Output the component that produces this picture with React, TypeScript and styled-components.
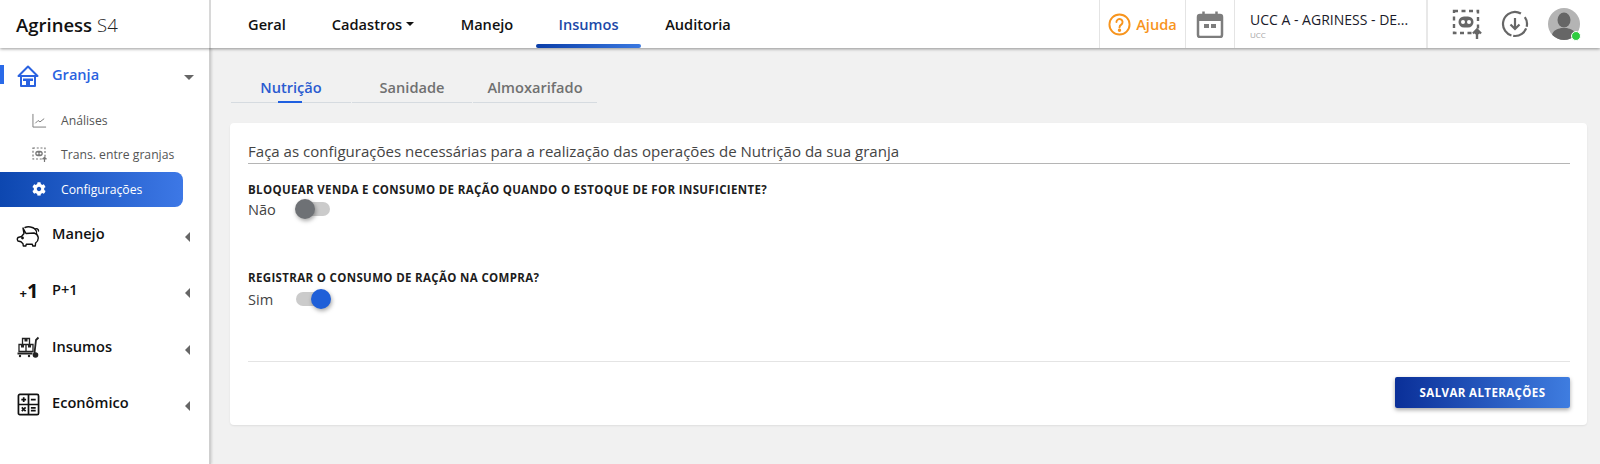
import styled, { createGlobalStyle } from 'styled-components'
import { FaCog } from 'react-icons/fa'

const GlobalStyle = createGlobalStyle`
  html, body {
    margin: 0;
    padding: 0;
    height: 100%;
    background: #f1f1f1;
    font-family: 'Open Sans', 'Noto Sans', sans-serif;
  }
  * { box-sizing: border-box; }
`

const Page = styled.div`
  display: flex;
  flex-direction: column;
  height: 464px;
  overflow: hidden;
`

const Header = styled.header`
  display: flex;
  align-items: stretch;
  height: 48px;
  flex: none;
  background: #fff;
  box-shadow: 0 1px 3px rgba(0, 0, 0, 0.4);
  position: relative;
  z-index: 2;
`

const Logo = styled.div`
  width: 211px;
  flex: none;
  padding-left: 16px;
  display: flex;
  align-items: center;
  gap: 5px;
  font-size: 18.5px;
  font-weight: 600;
  color: #111;
  border-right: 2px solid #d8d8d8;
  span {
    font-weight: 300;
    color: #222;
  }
`

const Nav = styled.nav`
  display: flex;
  flex: 1;
  padding-left: 15px;
`

const NavItem = styled.div<{ $active?: boolean; $w: number }>`
  width: ${(p) => p.$w}px;
  display: flex;
  align-items: center;
  justify-content: center;
  gap: 4px;
  position: relative;
  font-size: 14.6px;
  font-weight: 600;
  color: ${(p) => (p.$active ? '#1b49a8' : '#111')};
  &::after {
    content: '';
    display: ${(p) => (p.$active ? 'block' : 'none')};
    position: absolute;
    left: 0;
    right: 0;
    bottom: 0;
    height: 4px;
    border-radius: 2px;
    background: linear-gradient(90deg, #0a3ea8, #3a78e0);
  }
`

const Caret = styled.i`
  width: 0;
  height: 0;
  border-left: 4px solid transparent;
  border-right: 4px solid transparent;
  border-top: 4px solid #111;
`

const HeaderRight = styled.div`
  display: flex;
  align-items: stretch;
`

const Cell = styled.div<{ $w: number }>`
  width: ${(p) => p.$w}px;
  display: flex;
  align-items: center;
  justify-content: center;
  gap: 5px;
  border-left: 1px solid #e4e4e4;
`

const HelpText = styled.span`
  font-size: 14.6px;
  font-weight: 600;
  color: #f7941d;
`

const FarmCell = styled(Cell)`
  flex-direction: column;
  align-items: flex-start;
  gap: 0;
  padding-left: 15px;
  border-right: 2px solid #e8e8e8;
`

const FarmName = styled.div`
  font-size: 14px;
  line-height: 19px;
  margin-top: 3px;
  color: #1a1a2a;
`

const FarmSub = styled.div`
  font-size: 8px;
  line-height: 12px;
  color: #a5a5a5;
`

const Tools = styled.div`
  display: flex;
  align-items: center;
  width: 172px;
  padding-left: 24px;
  gap: 19px;
`

const Avatar = styled.div`
  width: 32px;
  height: 32px;
  border-radius: 50%;
  background: #b4b4b4;
  overflow: hidden;
`

const AvatarWrap = styled.div`
  position: relative;
  width: 32px;
  height: 32px;
  flex: none;
`

const Online = styled.i`
  position: absolute;
  right: -1px;
  bottom: -1px;
  width: 8px;
  height: 8px;
  border-radius: 50%;
  background: #2ecc40;
  border: 1px solid #fff;
  box-sizing: content-box;
`

const Body = styled.div`
  display: flex;
  flex: 1;
  min-height: 0;
`

const Sidebar = styled.aside`
  width: 211px;
  flex: none;
  background: #fff;
  border-right: 2px solid #cfcfcf;
  box-shadow: 1px 0 2px rgba(0, 0, 0, 0.12);
  padding-top: 8px;
`

const Section = styled.div<{ $active?: boolean }>`
  display: flex;
  align-items: center;
  height: 40px;
  margin-bottom: ${(p) => (p.$active ? 0 : 16.3)}px;
  padding-left: 16px;
  position: relative;
  color: ${(p) => (p.$active ? '#2a62e0' : '#111')};
  &::before {
    content: '';
    display: ${(p) => (p.$active ? 'block' : 'none')};
    position: absolute;
    left: 0;
    top: 9px;
    width: 4px;
    height: 19px;
    background: #2a6ae8;
  }
`

const SectionIcon = styled.div`
  width: 24px;
  height: 24px;
  flex: none;
  display: flex;
  align-items: center;
  justify-content: center;
`

const SectionLabel = styled.span`
  margin-left: 12px;
  margin-top: -5px;
  font-size: 14.6px;
  font-weight: 600;
  flex: 1;
`

const ArrowLeft = styled.i`
  margin-right: 19px;
  margin-top: 3px;
  width: 0;
  height: 0;
  border-top: 5px solid transparent;
  border-bottom: 5px solid transparent;
  border-right: 5px solid #666;
`

const ArrowDown = styled.i`
  margin-right: 15px;
  margin-top: 2px;
  width: 0;
  height: 0;
  border-left: 5px solid transparent;
  border-right: 5px solid transparent;
  border-top: 5px solid #666;
`

const PlusOne = styled.div`
  display: flex;
  align-items: baseline;
  margin-left: 2px;
  font-size: 20px;
  line-height: 20px;
  font-weight: 700;
  color: #111;
  small {
    font-size: 13px;
  }
`

const SubList = styled.div`
  display: flex;
  flex-direction: column;
  margin-top: 7px;
  margin-bottom: 9px;
`

const SubItem = styled.div<{ $active?: boolean }>`
  width: 183px;
  height: 34.5px;
  display: flex;
  align-items: center;
  gap: 14px;
  padding-left: 31px;
  font-size: 12.2px;
  color: ${(p) => (p.$active ? '#fff' : '#555')};
  border-radius: 0 8px 8px 0;
  background: ${(p) => (p.$active ? 'linear-gradient(90deg, #0d47b0, #3d78e6)' : 'transparent')};
`

const SubIcon = styled.div`
  width: 16px;
  height: 16px;
  flex: none;
  display: flex;
  align-items: center;
  justify-content: center;
`

const Main = styled.main`
  flex: 1;
  min-width: 0;
  padding: 16px 13px 0 19px;
`

const Tabs = styled.div`
  display: flex;
  gap: 1px;
  width: max-content;
  margin: 0 0 20px 1px;
`

const Tab = styled.div<{ $active?: boolean; $w: number }>`
  width: ${(p) => p.$w}px;
  height: 39px;
  padding-top: 7px;
  display: flex;
  align-items: center;
  justify-content: center;
  position: relative;
  font-size: 14.6px;
  font-weight: 600;
  color: ${(p) => (p.$active ? '#2a5bd0' : '#707070')};
  border-bottom: 1px solid #d6dbe0;
  &::after {
    content: '';
    display: ${(p) => (p.$active ? 'block' : 'none')};
    position: absolute;
    bottom: -1px;
    left: 47px;
    width: 24px;
    height: 2px;
    background: #1f5fe0;
  }
`

const Card = styled.section`
  height: 302px;
  background: #fff;
  border-radius: 4px;
  box-shadow: 0 1px 2px rgba(0, 0, 0, 0.08);
  padding: 18px 17px 0 18px;
  display: flex;
  flex-direction: column;
`

const Intro = styled.div`
  font-size: 15.05px;
  line-height: 20px;
  padding-bottom: 2px;
  color: #444;
  border-bottom: 1px solid #b5b5b5;
`

const Option = styled.div<{ $h: number; $top?: number }>`
  height: ${(p) => p.$h}px;
  margin-top: ${(p) => p.$top ?? 0}px;
`

const OptionTitle = styled.div`
  font-size: 11.5px;
  font-weight: 700;
  letter-spacing: 0.345px;
  line-height: 16px;
  color: #1d1d1d;
`

const OptionRow = styled.div<{ $shift: number }>`
  display: flex;
  align-items: center;
  height: 24px;
  margin-top: ${(p) => p.$shift}px;
  font-size: 14.6px;
  color: #444;
`

const OptionValue = styled.span`
  width: 48px;
`

const Switch = styled.div<{ $on?: boolean }>`
  position: relative;
  width: 34px;
  height: 14px;
  border-radius: 7px;
  background: #cbcbcb;
  &::after {
    content: '';
    position: absolute;
    top: -3px;
    ${(p) => (p.$on ? 'right: -1px;' : 'left: -1px;')}
    width: 20px;
    height: 20px;
    border-radius: 50%;
    background: ${(p) => (p.$on ? '#1f5fd8' : '#6e7175')};
    box-shadow: 1px 2px 4px rgba(0, 0, 0, 0.35);
  }
`

const Footer = styled.div`
  margin-top: 8px;
  padding-top: 15px;
  border-top: 1px solid #e4e4e4;
  display: flex;
  justify-content: flex-end;
`

const SaveButton = styled.button`
  width: 175px;
  height: 31px;
  border: none;
  border-radius: 2px;
  background: linear-gradient(90deg, #0a2f98, #3f7de0);
  box-shadow: 0 2px 4px rgba(0, 0, 0, 0.35);
  color: #fff;
  font-family: inherit;
  font-size: 11.5px;
  font-weight: 700;
  letter-spacing: 0.4px;
`

function HomeIcon() {
  return (
    <svg width="24" height="24" viewBox="0 0 24 24" fill="none" stroke="#2a62e0" strokeWidth="2">
      <path d="M12 2.500 2.500 12h19zM5 12v10h14V12" strokeLinejoin="round" />
      <path d="M7 14.500h10v2.500h-3v5h-4v-5H7z" fill="#2a62e0" stroke="none" />
    </svg>
  )
}

function PigIcon() {
  return (
    <svg width="24" height="24" viewBox="0 0 24 24" fill="none" stroke="#111" strokeWidth="1.400" strokeLinejoin="round" strokeLinecap="round">
      <path d="M7 4l1 5.500-2.500 3L2 13.500c-.8 1-.8 2.500 0 3.500l3 .8 2 2 .3 2.200h2.500l.5-1.800h6l.5 1.800h2.500l.3-3c2-1.500 3-3.500 2.500-6-.4-2-2-3.500-4-4L10 9.500z" />
      <path d="M9 3.500c3-1.500 8-.5 10 1.500 1.500 1.500 2 3 1.500 5" />
      <path d="M19 5c1.500-.8 3.500 0 3.500 2" />
      <circle cx="6.500" cy="14" r=".7" fill="#111" />
    </svg>
  )
}

function CartIcon() {
  return (
    <svg width="24" height="24" viewBox="0 0 24 24" fill="none" stroke="#222" strokeWidth="1.300">
      <path d="M6.500 2.500h7v6h-7zM3 8.500h7v7H3zM10 8.500h7v7h-7z" />
      <path d="M8.500 2.500h3v3h-3zM5 8.500h3v3H5zM12 8.500h3v3h-3z" fill="#222" stroke="none" />
      <path d="M18.500 17 20 4l2.500-2.500M1.500 17.500h15" strokeWidth="1.800" />
      <circle cx="19.500" cy="19" r="2.800" fill="#222" stroke="none" />
      <circle cx="4" cy="20" r="1.200" fill="#222" stroke="none" />
      <circle cx="13" cy="20" r="1.200" fill="#222" stroke="none" />
    </svg>
  )
}

function CalcIcon() {
  return (
    <svg width="23" height="23" viewBox="0 0 24 24" fill="none" stroke="#111" strokeWidth="1.800">
      <rect x="1.500" y="1.500" width="21" height="21" rx="1.500" />
      <path d="M12 2v20M2 12h20" />
      <path d="M4.500 7h5M7 4.500v5M14.500 7h5M14.500 15.500h5M14.500 18.500h5M5 15l4 4M9 15l-4 4" />
    </svg>
  )
}

function HelpIcon() {
  return (
    <svg width="23" height="23" viewBox="0 0 24 24" fill="none" stroke="#f7941d" strokeWidth="2">
      <circle cx="12" cy="12" r="10.500" />
      <path d="M8.800 9.500a3.200 3.200 0 1 1 5 2.600c-1.200.8-1.800 1.400-1.800 2.900" strokeLinecap="round" />
      <circle cx="12" cy="18" r=".8" fill="#f7941d" />
    </svg>
  )
}

function CalendarIcon() {
  return (
    <svg width="28" height="28" viewBox="0 0 28 28" fill="none">
      <rect x="2" y="5" width="24" height="22" rx="2" stroke="#7d7d7d" strokeWidth="2.500" />
      <path d="M2 6h24v5H2z" fill="#7d7d7d" />
      <path d="M7.500 1.500v6M20.500 1.500v6" stroke="#7d7d7d" strokeWidth="2.500" />
      <path d="M8 14h5v4H8zM15 14h5v4h-5z" fill="#7d7d7d" />
    </svg>
  )
}

function TransferIcon({ size, color }: { size: number; color: string }) {
  return (
    <svg width={size} height={size} viewBox="0 0 30 30" fill="none" stroke={color}>
      <path d="M2 2h24v22H2z" strokeWidth="2.400" strokeDasharray="4 3.500" />
      <rect x="6.500" y="7.500" width="15" height="11" rx="5.500" fill={color} stroke="none" />
      <circle cx="11" cy="13" r="2" fill="#fff" stroke="none" />
      <circle cx="17" cy="13" r="2" fill="#fff" stroke="none" />
      <path d="M25 30v-9M21 24.500l4-4 4 4" strokeWidth="2.400" />
    </svg>
  )
}

function SyncIcon() {
  return (
    <svg width="28" height="28" viewBox="0 0 28 28" fill="none" stroke="#666" strokeWidth="2.200">
      <circle cx="14" cy="14" r="12" strokeDasharray="10 1.800 16 1.800 40" transform="rotate(-35 14 14)" />
      <path d="M14 8v11M9.500 14.500 14 19l4.500-4.500" />
    </svg>
  )
}

function ChartIcon() {
  return (
    <svg width="15" height="15" viewBox="0 0 16 16" fill="none" stroke="#777" strokeWidth="1">
      <path d="M1 1v14h14" />
      <path d="M3.500 11l3-3 2 1.500L13 6" />
    </svg>
  )
}

function AvatarFigure() {
  return (
    <svg width="32" height="32" viewBox="0 0 32 32" fill="#666">
      <ellipse cx="16" cy="12" rx="6.500" ry="7.500" />
      <path d="M4 27c1-5 6-6 9-7h6c3 1 8 2 9 7v5H4z" />
    </svg>
  )
}

const navItems = [
  { label: 'Geral', w: 82 },
  { label: 'Cadastros', w: 130, caret: true },
  { label: 'Manejo', w: 98 },
  { label: 'Insumos', w: 105, active: true },
  { label: 'Auditoria', w: 114 }
]

const sections = [
  { label: 'Manejo', icon: <PigIcon /> },
  {
    label: 'P+1',
    icon: (
      <PlusOne>
        <small>+</small>1
      </PlusOne>
    )
  },
  { label: 'Insumos', icon: <CartIcon /> },
  { label: 'Econômico', icon: <CalcIcon /> }
]

function App() {
  return (
    <>
      <GlobalStyle />
      <Page>
        <Header>
          <Logo>
            Agriness <span>S4</span>
          </Logo>
          <Nav>
            {navItems.map((item) => (
              <NavItem key={item.label} $w={item.w} $active={item.active}>
                {item.label}
                {item.caret && <Caret />}
              </NavItem>
            ))}
          </Nav>
          <HeaderRight>
            <Cell $w={86}>
              <HelpIcon />
              <HelpText>Ajuda</HelpText>
            </Cell>
            <Cell $w={49}>
              <CalendarIcon />
            </Cell>
            <FarmCell $w={194}>
              <FarmName>UCC A - AGRINESS - DE...</FarmName>
              <FarmSub>UCC</FarmSub>
            </FarmCell>
            <Tools>
              <TransferIcon size={30} color="#666" />
              <SyncIcon />
              <AvatarWrap>
                <Avatar>
                  <AvatarFigure />
                </Avatar>
                <Online />
              </AvatarWrap>
            </Tools>
          </HeaderRight>
        </Header>
        <Body>
          <Sidebar>
            <Section $active>
              <SectionIcon>
                <HomeIcon />
              </SectionIcon>
              <SectionLabel>Granja</SectionLabel>
              <ArrowDown />
            </Section>
            <SubList>
              <SubItem>
                <SubIcon>
                  <ChartIcon />
                </SubIcon>
                Análises
              </SubItem>
              <SubItem>
                <SubIcon>
                  <TransferIcon size={15} color="#777" />
                </SubIcon>
                Trans. entre granjas
              </SubItem>
              <SubItem $active>
                <SubIcon>
                  <FaCog size={14} color="#fff" />
                </SubIcon>
                Configurações
              </SubItem>
            </SubList>
            {sections.map((section) => (
              <Section key={section.label}>
                <SectionIcon>{section.icon}</SectionIcon>
                <SectionLabel>{section.label}</SectionLabel>
                <ArrowLeft />
              </Section>
            ))}
          </Sidebar>
          <Main>
            <Tabs>
              <Tab $active $w={120}>
                Nutrição
              </Tab>
              <Tab $w={120}>Sanidade</Tab>
              <Tab $w={124}>Almoxarifado</Tab>
            </Tabs>
            <Card>
              <Intro>
                Faça as configurações necessárias para a realização das operações de Nutrição da sua
                granja
              </Intro>
              <Option $h={88} $top={18}>
                <OptionTitle>
                  BLOQUEAR VENDA E CONSUMO DE RAÇÃO QUANDO O ESTOQUE DE FOR INSUFICIENTE?
                </OptionTitle>
                <OptionRow $shift={-1}>
                  <OptionValue>Não</OptionValue>
                  <Switch />
                </OptionRow>
              </Option>
              <Option $h={83}>
                <OptionTitle>REGISTRAR O CONSUMO DE RAÇÃO NA COMPRA?</OptionTitle>
                <OptionRow $shift={1}>
                  <OptionValue>Sim</OptionValue>
                  <Switch $on />
                </OptionRow>
              </Option>
              <Footer>
                <SaveButton>SALVAR ALTERAÇÕES</SaveButton>
              </Footer>
            </Card>
          </Main>
        </Body>
      </Page>
    </>
  )
}

export default App
